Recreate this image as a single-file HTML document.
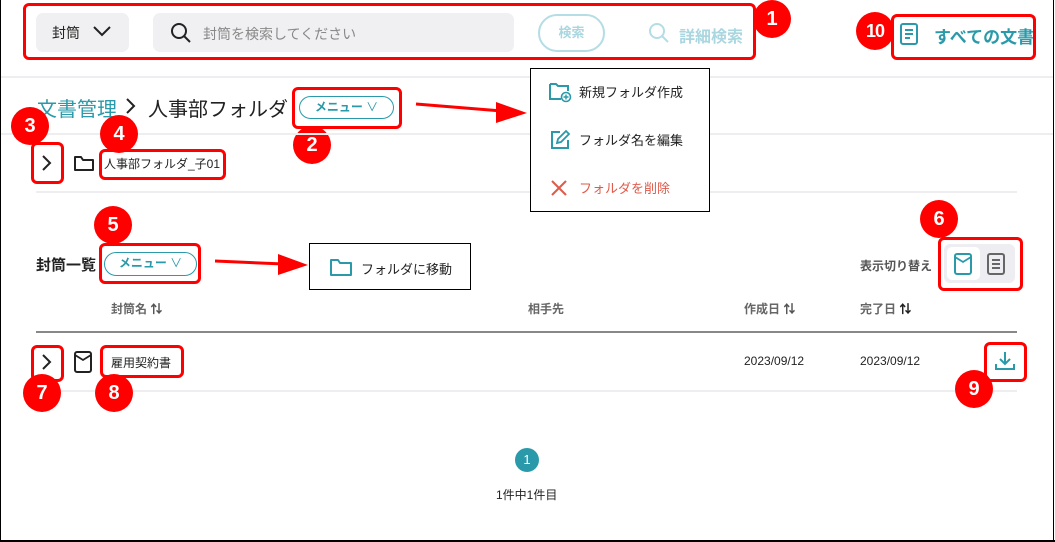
<!DOCTYPE html>
<html><head><meta charset="utf-8">
<style>
*{margin:0;padding:0;box-sizing:border-box}
body{width:1055px;height:542px;position:relative;overflow:hidden;background:#fff;font-family:"Liberation Sans","Noto Sans CJK JP",sans-serif;color:#222}
.a{position:absolute}
.rb{position:absolute;border:3px solid #f00;border-radius:6px}
.bd{position:absolute;width:38px;height:38px;border-radius:50%;background:#f00;color:#fff;font-weight:bold;font-size:20px;text-align:center;line-height:38px;font-family:"Liberation Sans",sans-serif}
.hl{position:absolute;height:2px;background:#eeeef0}
.pill{position:absolute;border:1.5px solid #2a9aaa;border-radius:12px;color:#2a9aaa;font-size:12px;font-weight:bold;text-align:center;line-height:20px}
.th{position:absolute;top:300px;font-size:12px;font-weight:bold;color:#666}
.t{position:absolute;white-space:nowrap}
</style></head><body>
<div class="a" style="left:0;top:0;width:1px;height:542px;background:#000"></div>
<div class="a" style="right:1px;top:0;width:1px;height:542px;background:#000"></div>
<div class="a" style="left:0;bottom:0;width:1055px;height:2px;background:#000"></div>

<div class="a" style="left:36px;top:13px;width:93px;height:39px;background:#f0f0f3;border-radius:7px"></div>
<div class="t" style="left:52px;top:23px;font-size:14px">封筒</div>
<svg class="a" style="left:92px;top:24px" width="20" height="14"><path d="M2 3l8 8 8-8" fill="none" stroke="#222" stroke-width="2"/></svg>
<div class="a" style="left:153px;top:13px;width:361px;height:39px;background:#f0f0f3;border-radius:7px"></div>
<svg class="a" style="left:169px;top:21px" width="24" height="24"><circle cx="10" cy="10" r="7" fill="none" stroke="#222" stroke-width="2"/><path d="M15 15l6 6" stroke="#222" stroke-width="2"/></svg>
<div class="t" style="left:203px;top:24px;font-size:14px;color:#888">封筒を検索してください</div>
<div class="a" style="left:538px;top:14px;width:67px;height:38px;border:2px solid #b4dde5;border-radius:19px;color:#a9d6df;font-size:13px;font-weight:bold;text-align:center;line-height:34px">検索</div>
<svg class="a" style="left:647px;top:21px" width="24" height="24"><circle cx="10" cy="10" r="7" fill="none" stroke="#b4dde5" stroke-width="2"/><path d="M15 15l6 6" stroke="#b4dde5" stroke-width="2"/></svg>
<div class="t" style="left:679px;top:23px;font-size:16px;font-weight:bold;color:#a9d6df">詳細検索</div>
<div class="rb" style="left:23px;top:3px;width:733px;height:57px"></div>
<div class="bd" style="left:753px;top:0px">1</div>

<svg class="a" style="left:899px;top:22px" width="20" height="24"><rect x="2" y="2" width="16" height="20" rx="2" fill="none" stroke="#2a9aaa" stroke-width="2"/><path d="M6 8h8M6 12h8M6 16h5" stroke="#2a9aaa" stroke-width="2"/></svg>
<div class="t" style="left:934px;top:23px;font-size:17px;font-weight:bold;color:#2a9aaa">すべての文書</div>
<div class="rb" style="left:891px;top:14px;width:145px;height:46px"></div>
<div class="bd" style="left:856px;top:12px;font-size:18px;letter-spacing:-1px">10</div>

<div class="hl" style="left:1px;top:76px;width:1052px"></div>

<div class="t" style="left:37px;top:93px;font-size:20px;color:#2a9aaa">文書管理</div>
<svg class="a" style="left:124px;top:97px" width="14" height="18"><path d="M3 2l7 7-7 7" fill="none" stroke="#222" stroke-width="2"/></svg>
<div class="t" style="left:148px;top:93px;font-size:20px">人事部フォルダ</div>
<div class="pill" style="left:299px;top:96px;width:95px;height:23px">メニュー <span style="font-weight:normal">∨</span></div>
<div class="rb" style="left:292px;top:87px;width:110px;height:42px"></div>
<div class="bd" style="left:293px;top:126px">2</div>
<svg class="a" style="left:412px;top:94px" width="120" height="34"><path d="M4 10L90 17" stroke="#f00" stroke-width="3"/><path d="M84 8L115 19 84 29z" fill="#f00"/></svg>

<div class="hl" style="left:1px;top:133px;width:530px"></div>
<div class="hl" style="left:709px;top:133px;width:344px"></div>

<svg class="a" style="left:40px;top:153px" width="14" height="20"><path d="M3 3l7 7-7 7" fill="none" stroke="#222" stroke-width="2"/></svg>
<div class="rb" style="left:31px;top:142px;width:33px;height:42px"></div>
<div class="bd" style="left:11px;top:107px">3</div>
<svg class="a" style="left:73px;top:154px" width="22" height="18"><path d="M2 3h6l2 3h10v10H2z" fill="none" stroke="#222" stroke-width="2" stroke-linejoin="round"/></svg>
<div class="t" style="left:104px;top:155px;font-size:12px">人事部フォルダ_子01</div>
<div class="rb" style="left:99px;top:149px;width:127px;height:31px"></div>
<div class="bd" style="left:100px;top:115px">4</div>

<div class="hl" style="left:36px;top:191px;width:981px"></div>

<div class="a" style="left:530px;top:68px;width:180px;height:144px;border:1px solid #000;background:#fff"></div>
<svg class="a" style="left:548px;top:81px" width="24" height="22"><path d="M2 3h6l2 2h10v5M2 3v15h11" fill="none" stroke="#2a9aaa" stroke-width="2"/><circle cx="18" cy="16" r="4.5" fill="none" stroke="#2a9aaa" stroke-width="1.6"/><path d="M18 13.5v5M15.5 16h5" stroke="#2a9aaa" stroke-width="1.4"/></svg>
<div class="t" style="left:579px;top:82px;font-size:13px">新規フォルダ作成</div>
<svg class="a" style="left:549px;top:129px" width="22" height="22"><path d="M11 3H3v16h16v-8" fill="none" stroke="#2a9aaa" stroke-width="2"/><path d="M8 14l1-4 8-8 3 3-8 8z" fill="none" stroke="#2a9aaa" stroke-width="1.8"/></svg>
<div class="t" style="left:579px;top:130px;font-size:13px">フォルダ名を編集</div>
<svg class="a" style="left:550px;top:179px" width="18" height="18"><path d="M2 2l14 14M16 2L2 16" stroke="#e05a4a" stroke-width="2"/></svg>
<div class="t" style="left:579px;top:178px;font-size:13px;color:#e05a4a">フォルダを削除</div>

<div class="t" style="left:36px;top:254px;font-size:15px;font-weight:bold">封筒一覧</div>
<div class="pill" style="left:104px;top:252px;width:93px;height:24px;line-height:21px">メニュー <span style="font-weight:normal">∨</span></div>
<div class="rb" style="left:99px;top:243px;width:102px;height:41px"></div>
<div class="bd" style="left:94px;top:206px">5</div>
<svg class="a" style="left:212px;top:250px" width="100" height="28"><path d="M3 11L72 14" stroke="#f00" stroke-width="3"/><path d="M66 4L96 15 66 25z" fill="#f00"/></svg>
<div class="a" style="left:309px;top:243px;width:162px;height:47px;border:1px solid #000;background:#fff"></div>
<svg class="a" style="left:329px;top:257px" width="24" height="20"><path d="M2 3h7l2 3h11v12H2z" fill="none" stroke="#2a9aaa" stroke-width="2" stroke-linejoin="round"/></svg>
<div class="t" style="left:361px;top:259px;font-size:13px">フォルダに移動</div>

<div class="t" style="left:860px;top:257px;font-size:12px;font-weight:bold;color:#555">表示切り替え</div>
<div class="a" style="left:944px;top:244px;width:71px;height:39px;background:#eeeef2;border-radius:6px"></div>
<div class="a" style="left:947px;top:247px;width:33px;height:33px;background:#fff;border-radius:5px"></div>
<svg class="a" style="left:953px;top:252px" width="22" height="24"><rect x="2" y="2" width="16" height="20" rx="2" fill="none" stroke="#2a9aaa" stroke-width="2"/><path d="M2 5l8 5 8-5" fill="none" stroke="#2a9aaa" stroke-width="1.8"/></svg>
<svg class="a" style="left:986px;top:252px" width="22" height="24"><rect x="2" y="2" width="16" height="20" rx="2" fill="none" stroke="#666" stroke-width="2"/><path d="M6 8h8M6 12h8M6 16h8" stroke="#666" stroke-width="2"/></svg>
<div class="rb" style="left:938px;top:237px;width:85px;height:54px"></div>
<div class="bd" style="left:920px;top:200px">6</div>

<div class="th" style="left:111px">封筒名 <b style="color:#555">⇅</b></div>
<div class="th" style="left:528px">相手先</div>
<div class="th" style="left:744px">作成日 <b style="color:#555">⇅</b></div>
<div class="th" style="left:860px">完了日 <b style="color:#222">⇅</b></div>
<div class="a" style="left:36px;top:331px;width:981px;height:2px;background:#888"></div>

<svg class="a" style="left:40px;top:352px" width="14" height="20"><path d="M3 3l7 7-7 7" fill="none" stroke="#222" stroke-width="2"/></svg>
<div class="rb" style="left:31px;top:345px;width:33px;height:37px"></div>
<svg class="a" style="left:73px;top:350px" width="22" height="24"><rect x="2" y="2" width="16" height="20" rx="2" fill="none" stroke="#222" stroke-width="2"/><path d="M2 5l8 5 8-5" fill="none" stroke="#222" stroke-width="1.8"/></svg>
<div class="t" style="left:111px;top:354px;font-size:12px">雇用契約書</div>
<div class="rb" style="left:100px;top:345px;width:84px;height:33px"></div>
<div class="t" style="left:744px;top:354px;font-size:12px">2023/09/12</div>
<div class="t" style="left:860px;top:354px;font-size:12px">2023/09/12</div>
<svg class="a" style="left:993px;top:350px" width="24" height="22"><path d="M12 2v12M7 9l5 5 5-5M3 14v5h18v-5" fill="none" stroke="#2a9aaa" stroke-width="2"/></svg>
<div class="rb" style="left:984px;top:342px;width:43px;height:40px"></div>
<div class="hl" style="left:36px;top:390px;width:981px"></div>
<div class="bd" style="left:23px;top:374px">7</div>
<div class="bd" style="left:95px;top:374px">8</div>
<div class="bd" style="left:955px;top:370px">9</div>

<div class="a" style="left:515px;top:448px;width:24px;height:24px;border-radius:50%;background:#2a9aaa;color:#fff;font-size:13px;text-align:center;line-height:24px">1</div>
<div class="t" style="left:496px;top:486px;font-size:12px">1件中1件目</div>
</body></html>
